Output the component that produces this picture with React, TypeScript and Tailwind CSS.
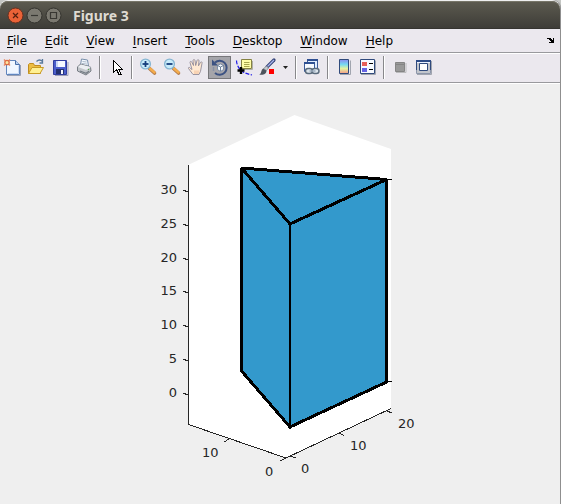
import React from "react";

const menus = ["File", "Edit", "View", "Insert", "Tools", "Desktop", "Window", "Help"];

function ToolButton({ label, pressed, children }: { label: string; pressed?: boolean; children: React.ReactNode }) {
  return (
    <button
      type="button"
      aria-label={label}
      aria-pressed={pressed}
      className={`mr-px size-[23px] shrink-0 ${pressed ? "bg-[#a5a5aa] outline outline-1 -outline-offset-1 outline-[#77777a]" : ""}`}
    >
      <svg viewBox="0 0 23 23" className="block size-[23px]" aria-hidden="true">
        {children}
      </svg>
    </button>
  );
}

function Separator() {
  return (
    <div className="flex h-[23px] w-2 shrink-0 pl-[3px]">
      <div className="w-px bg-[#88888b]" />
      <div className="w-px bg-white" />
    </div>
  );
}

function Magnifier({ plus }: { plus?: boolean }) {
  return (
    <>
      <path d="M13.500 12.500 18.500 17" stroke="#b07848" strokeWidth="3.600" strokeLinecap="round" />
      <path d="M14 12.500 18.500 16.500" stroke="#f4ac4c" strokeWidth="2.400" strokeLinecap="round" />
      <circle cx="9.500" cy="8" r="4.900" fill="#c9ecfa" stroke="#86b5d2" strokeWidth="1.300" />
      <path d="M6.500 8h6" stroke="#153d7c" strokeWidth="1.800" />
      {plus && <path d="M9.500 5v6" stroke="#153d7c" strokeWidth="1.800" />}
    </>
  );
}

function Toolbar() {
  return (
    <div role="toolbar" aria-label="Figure toolbar" className="flex h-[30px] items-start overflow-hidden border-b border-white pt-[2px] shadow-[inset_0_-1px_#99999d]">
      <ToolButton label="New figure">
        <path d="M7 19.500h13.500V9" fill="none" stroke="#98a0b4" />
        <path d="M6.500 4.500h9l4 4v10h-13z" fill="#f0f6ff" stroke="#6185bd" />
        <path d="M8 17.500h10.500V9.500" fill="none" stroke="#cadbf6" />
        <path d="M15.500 4.500v4h4" fill="#b9cff0" stroke="#496fa8" />
        <path d="M4 3.500l1.500 1.500M10 3.500 8.500 5M4 9.500 5.500 8M10 9.500 8.500 8" stroke="#e78a63" strokeWidth="1.400" />
        <circle cx="7" cy="6.500" r="2.200" fill="#ffe6a2" stroke="#dd6b45" strokeWidth="1.300" />
      </ToolButton>
      <ToolButton label="Open file">
        <path d="M12.500 5.500q3-3 6 0M18.500 3v4h-3" fill="none" stroke="#58799c" strokeWidth="1.300" />
        <path d="M4.500 17.500v-9l1-1h4l1 2h6v8z" fill="#edbd42" stroke="#c08c20" />
        <path d="M4.500 17.500 8 11.500h11.500l-3.500 6z" fill="#fff093" stroke="#c99b25" />
      </ToolButton>
      <ToolButton label="Save figure">
        <path d="M7 19.500h13V6" fill="none" stroke="#9c9eb5" />
        <path d="M5.500 4.500h13v14h-13z" fill="#4b5ecb" stroke="#303d9d" />
        <path d="M8 5h9v6H8z" fill="#f5f8ff" />
        <path d="M8 5h2v6H8z" fill="#c8d6f4" />
        <path d="M8 13h8v5H8z" fill="#24316f" />
        <path d="M13 14h2v4h-2z" fill="#f5f7ff" />
      </ToolButton>
      <ToolButton label="Print figure">
        <path d="m8.500 9 1-6 6 1 1 6z" fill="#f5faff" stroke="#7990ab" />
        <path d="m10.500 5.500 4 .5m-4.500 1.500 5 .6" stroke="#aab9c9" />
        <path d="m5.500 11 3-3 10 3 .5 4-5 4-8.500-4z" fill="#c2c5ca" stroke="#777d84" />
        <path d="m6 11 8 3 5-3-10-2.500z" fill="#eceff2" />
        <path d="m8 15 6 2.300 3-2" fill="none" stroke="#747b84" strokeWidth="1.300" />
        <circle cx="16.500" cy="13.500" r=".7" fill="#55a84e" />
      </ToolButton>
      <Separator />
      <ToolButton label="Edit plot">
        <path d="M9.500 4.500v12l3-3 2.500 5h2l-2.500-5.500h3.500z" fill="#fff" stroke="#000" shapeRendering="crispEdges" />
      </ToolButton>
      <Separator />
      <ToolButton label="Zoom in"><Magnifier plus /></ToolButton>
      <ToolButton label="Zoom out"><Magnifier /></ToolButton>
      <ToolButton label="Pan">
        <path d="m9 18.500-4.500-6c-.5-1.500 1.500-1.500 2 0l1.500 1-2-7c0-1.500 1.500-1.500 2 0l1.500 3-.5-5c.3-1.300 1.700-1.300 2 0l.7 5L13 4.500c.5-1.300 2-1 2 .3l-.5 5 2-3.500c1-1 2 0 1.500 1l-1.500 8-1.500 3.200z" fill="#ffe9d2" stroke="#858090" strokeWidth=".8" />
        <path d="M10 14.500v3.500h4.500l1-3.500" fill="#f8d3b4" />
      </ToolButton>
      <ToolButton label="Rotate 3D" pressed>
        <path d="M7 6.500A7 7 0 1 1 7 17" fill="none" stroke="#3c5282" strokeWidth="2" />
        <path d="M4 3.500v6h6z" fill="#3c5282" />
        <path d="M5.500 11.500v3.500" stroke="#6d7fa4" strokeWidth="1.500" strokeDasharray="1 1" />
        <path d="m9.500 9.500 3-1.500 3 1.500v4l-3 2-3-2z" fill="#f4f8fc" stroke="#6b80a0" strokeWidth=".8" />
        <path d="m9.500 9.500 3 1.500 3-1.500M12.500 11v4" fill="none" stroke="#526885" strokeWidth=".8" />
      </ToolButton>
      <ToolButton label="Data cursor">
        <path d="M4.500 4.500c0 3 1.500 7 4 9.500s5 3.500 11.500 5" fill="none" stroke="#201be9" strokeWidth="1.200" strokeDasharray="4 1.500" />
        <path d="M10 13.500h10.500V5" fill="none" stroke="#b0b0a8" />
        <path d="M9.500 3.500h10v9h-10z" fill="#fffda8" stroke="#858243" />
        <path d="M12 6.500h5.500M12 8.500h5.500M12 10.500h5.500" stroke="#a7a54e" />
        <path d="M9 11v7M5.500 14.500h7" stroke="#000" strokeWidth="2.400" />
      </ToolButton>
      <ToolButton label="Brush data">
        <path d="m11 11 7-7" stroke="#344377" strokeWidth="3.200" strokeLinecap="round" />
        <path d="m11.500 10.500 6.500-6.500" stroke="#a9b5ee" strokeWidth="1.300" />
        <path d="M3 18.500c3-.5 1.500-5 4.500-6l3 2c0 4-4 5-7.500 4z" fill="#4c535c" />
        <path d="m7.500 12.500 3-2.500 2 2-2 2.500z" fill="#c5cad0" stroke="#6d737c" strokeWidth=".6" />
        <path d="M13 13h5v5h-5z" fill="#f00" />
      </ToolButton>
      <button type="button" aria-label="Brush options" className="h-[23px] w-3 shrink-0">
        <svg viewBox="0 0 12 23" className="block h-[23px] w-3" aria-hidden="true"><path d="M3 10h5l-2.500 3z" fill="#222" /></svg>
      </button>
      <Separator />
      <ToolButton label="Link plot">
        <path d="M7.500 3.500h10v9h-10z" fill="#e0edff" stroke="#3b5a99" />
        <path d="M7 3h11v2H7z" fill="#2f5092" />
        <path d="M4.500 6.500h10v9h-10z" fill="#f7faff" stroke="#3b5a99" />
        <path d="M4 6h11v2H4z" fill="#2f5092" />
        <rect x="5.500" y="12.500" width="7" height="5" rx="2.500" fill="#dce5ed" stroke="#596a7c" strokeWidth="1.400" />
        <rect x="12" y="12.500" width="7" height="5" rx="2.500" fill="#dce5ed" stroke="#596a7c" strokeWidth="1.400" />
        <path d="M9.500 15h6" stroke="#96a7b8" strokeWidth="1.400" />
      </ToolButton>
      <Separator />
      <ToolButton label="Insert colorbar">
        <defs>
          <linearGradient id="colorbar" x1="0" y1="0" x2="0" y2="1">
            <stop offset="0" stopColor="#8c88ee" /><stop offset=".35" stopColor="#76d9f2" />
            <stop offset=".65" stopColor="#e6f2a0" /><stop offset="1" stopColor="#f49a87" />
          </linearGradient>
        </defs>
        <path d="M8 18.500h10.500V4.500" fill="none" stroke="#a1a5af" />
        <path d="M7.500 3.500h9v14h-9z" fill="url(#colorbar)" stroke="#304a7c" />
      </ToolButton>
      <ToolButton label="Insert legend">
        <path d="M5 18.500h14.500V4.500" fill="none" stroke="#a1a5af" />
        <path d="M4.500 3.500h14v14h-14z" fill="#f7faff" stroke="#304a7c" />
        <path d="M6 6h5v4H6z" fill="#e6605a" /><path d="M6 12h5v4H6z" fill="#6563e4" />
        <path d="M13 7.500h4M13 13.500h4" stroke="#000" />
      </ToolButton>
      <Separator />
      <ToolButton label="Hide plot tools">
        <path d="M8 16.500h10V7" fill="none" stroke="#bababc" />
        <path d="M7.500 6.500h9v9h-9z" fill="#999" stroke="#858585" />
        <path d="M8 8.500h8" stroke="#858585" />
      </ToolButton>
      <ToolButton label="Show plot tools and dock figure">
        <path d="M5 18.500h14.500V5" fill="none" stroke="#a1a5af" />
        <path d="M4.500 4.500h14v13h-14z" fill="#c3c6cc" />
        <path d="M4.500 14V4.500h14V14" fill="none" stroke="#304a7c" />
        <path d="M4.500 14v3.500h14V14" fill="none" stroke="#8d96aa" />
        <path d="M4 4h15v2H4z" fill="#2e4c87" />
        <path d="M5 6h13v1H5z" fill="#eaf1ff" />
        <path d="M7.500 7.500h8v7h-8z" fill="#fff" stroke="#304a7c" />
      </ToolButton>
    </div>
  );
}

const zTicks = [
  { value: 30, y: 108 }, { value: 25, y: 142 }, { value: 20, y: 176 }, { value: 15, y: 209 },
  { value: 10, y: 243 }, { value: 5, y: 277 }, { value: 0, y: 311 },
];

function Plot() {
  return (
    <svg viewBox="0 0 560 420" className="block w-full" role="img" aria-label="Triangular prism in three-dimensional axes">
      <path d="M188 81 294.500 31 391 65v260l-105 49-98-34z" fill="#fff" />
      <g fill="none" stroke="#262626" shapeRendering="crispEdges">
        <path d="M188.500 81v259.500L286 374l105-49.500" />
        <path d="m229 355-5 3M286 374l-6 3M290 372l6 2M339 349l5 2.500M387 327l5 2" />
        {zTicks.map((tick) => <path key={tick.value} d={`M183 ${tick.y - 2}l5 2`} />)}
      </g>
      <g shapeRendering="crispEdges">
        <path d="M241.500 84v203L290 343l96.500-45V96z" fill="#3399cc" />
        <g fill="none" stroke="#000" strokeWidth="3" strokeLinejoin="bevel">
          <path d="M241.500 84v203L290 343l96.500-45V95.500z" />
          <path d="M241.500 84 290 140l96.500-44.500" />
        </g>
        <path d="M290 140v205" stroke="#000" strokeWidth="2" />
        <path d="M386 95.500h6M386 297.500h6" stroke="#000" />
      </g>
      <g fill="#262626" className="font-['DejaVu_Sans',sans-serif] text-[13px]">
        {zTicks.map((tick) => <text key={tick.value} x="177" y={tick.y + 2} textAnchor="end">{tick.value}</text>)}
        <text x="202" y="373">10</text>
        <text x="265" y="392">0</text>
        <text x="301" y="389">0</text>
        <text x="350" y="366">10</text>
        <text x="398" y="344">20</text>
      </g>
    </svg>
  );
}

function WindowButton({ label, close, children }: { label: string; close?: boolean; children: React.ReactNode }) {
  return (
    <button type="button" aria-label={label} className="size-[17px]">
      <svg viewBox="0 0 17 17" className="block size-[17px]" aria-hidden="true">
        <circle cx="8.500" cy="8.500" r="7.500" fill={close ? "#ea6237" : "#7b7970"} stroke={close ? "#66301f" : "#34332e"} />
        <g fill="none" stroke={close ? "#54200f" : "#383732"} strokeWidth="1.200">{children}</g>
      </svg>
    </button>
  );
}

export default function App() {
  return (
    <div className="flex min-h-screen flex-col bg-[#c4c6c3] font-['DejaVu_Sans',sans-serif] text-black">
      <main className="mr-px flex flex-1 flex-col rounded-t-lg bg-[#efefef] shadow-[1px_0_#8f8f8f]">
        <header className="mt-px flex h-7 items-center rounded-t-lg border-b border-[#353430] bg-linear-to-b from-[#5d5b50] to-[#3e3d38] pt-px pl-[7px] shadow-[inset_0_1px_#777568]">
          <div className="flex gap-[2px]">
            <WindowButton label="Close" close><path d="m6 6 5 5m0-5-5 5" /></WindowButton>
            <WindowButton label="Minimize"><path d="M5 8.500h7" /></WindowButton>
            <WindowButton label="Maximize"><path d="M5.500 5.500h6v6h-6z" /></WindowButton>
          </div>
          <h1 className="ml-[11px] pt-px font-['Noto_Sans',sans-serif] text-[14px] leading-5 font-bold text-[#dfdbd2]">Figure 3</h1>
        </header>
        <div className="bg-[#ebe8ee]">
          <nav aria-label="Figure menu" className="flex h-[25px] items-center gap-[18px] border-b border-white pr-[5px] pb-px pl-[7px] text-[12px] shadow-[inset_0_-1px_#99999d]">
            {menus.map((name) => (
              <button key={name} type="button" className="leading-4">
                <u className="underline decoration-1 underline-offset-2">{name[0]}</u>{name.slice(1)}
              </button>
            ))}
            <button type="button" aria-label="Dock figure" className="ml-auto">
              <svg viewBox="0 0 8 7" className="block h-[7px] w-2" aria-hidden="true" shapeRendering="crispEdges">
                <path d="M1 1h3v1h1v1h1V1h1v5H2V5h2V4H3V3H2V2H0V1z" fill="#000" />
              </svg>
            </button>
          </nav>
          <Toolbar />
        </div>
        <Plot />
      </main>
    </div>
  );
}
